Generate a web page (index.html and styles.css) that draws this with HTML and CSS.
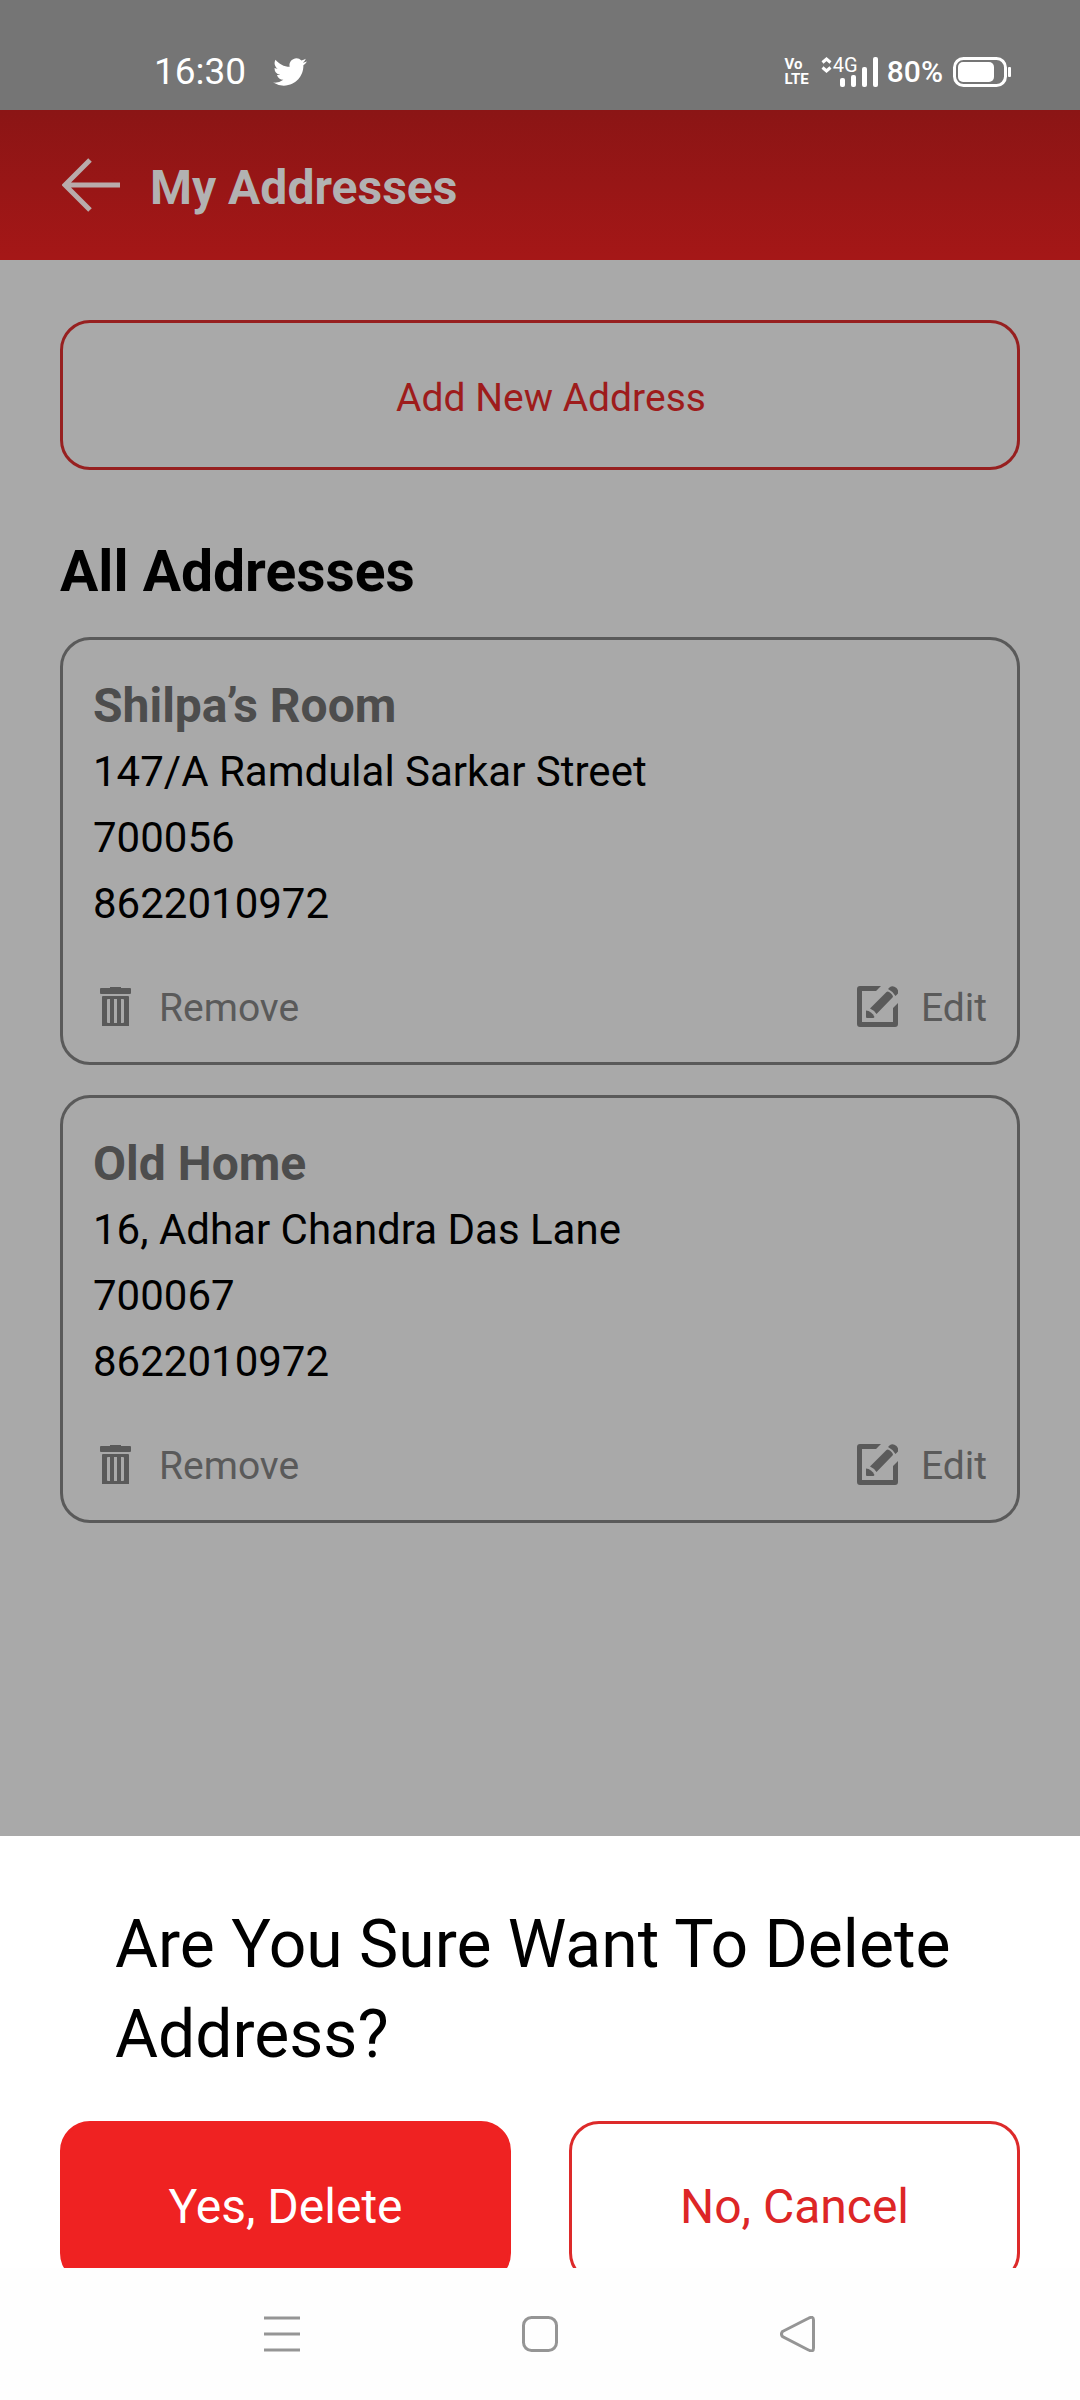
FILE: index.html
```html
<!DOCTYPE html>
<html lang="en">
<head>
<meta charset="utf-8">
<meta name="viewport" content="width=device-width, initial-scale=1">
<title>My Addresses</title>
<link rel="stylesheet" href="styles.css">
</head>
<body>
<svg class="sprite" aria-hidden="true">
  <symbol id="icon-trash" viewBox="0 0 31 39">
    <path d="M10 0h11v1h9q1 0 1 1v4q0 1-1 1H1Q0 7 0 6V2Q0 1 1 1h9z"/>
    <path fill-rule="evenodd" d="M3 9h25q1 0 1 1v29H2V10q0-1 1-1zM7 13v22q0 1 1 1h2V12H8q-1 0-1 1zM14 12v24h3V12zM21 12v24h2q1 0 1-1V13q0-1-1-1z"/>
  </symbol>
  <symbol id="icon-edit" viewBox="0 0 41 41">
    <path d="M24 0H3Q0 0 0 3v35q0 3 3 3h35q3 0 3-3V17l-5 5v14H5V5h14z"/>
    <path d="M13 22.500L29.500 6Q31 4.500 33.500 7Q37 10 35.500 11.500L19.500 28Q17.500 24.500 13 22.500z"/>
    <path d="M31 3L33 1Q36-1 39.500 2Q42 5 41 7.500L38.500 10Q36 5.500 31 3z"/>
    <path d="M9 24.500Q14.500 25 17.500 31L16.500 32H10Q9 32 9 31z"/>
  </symbol>
</svg>

<div class="screen">
  <div class="status">
    <div class="status-group">
      <span class="clock">16:30</span>
      <svg class="bird" viewBox="0 0 24 20" aria-label="Twitter"><path d="M23.953 2.570a10 10 0 0 1-2.825.775 4.958 4.958 0 0 0 2.163-2.723c-.951.555-2.005.959-3.127 1.184a4.920 4.920 0 0 0-8.384 4.482C7.690 6.095 4.067 4.130 1.640 1.162a4.822 4.822 0 0 0-.666 2.475c0 1.710.870 3.213 2.188 4.096a4.904 4.904 0 0 1-2.228-.616v.060a4.923 4.923 0 0 0 3.946 4.827 4.996 4.996 0 0 1-2.212.085 4.936 4.936 0 0 0 4.604 3.417 9.867 9.867 0 0 1-6.102 2.105c-.390 0-.779-.023-1.170-.067a13.995 13.995 0 0 0 7.557 2.209c9.053 0 13.998-7.496 13.998-13.985 0-.210 0-.420-.015-.630A9.935 9.935 0 0 0 24 2.590z"/></svg>
    </div>
    <div class="status-group">
      <span class="volte"><span>Vo</span><span>LTE</span></span>
      <span class="signal">
        <svg class="bars" viewBox="0 0 57 30" aria-hidden="true">
          <path class="stroke" d="M1.500 5.500L5.500 2l4 3.500M1.500 10.500l4 3.500 4-3.500"/>
          <rect x="19" y="21" width="5" height="9" rx="2"/>
          <rect x="30" y="18" width="5" height="12" rx="2"/>
          <rect x="41" y="10" width="5" height="20" rx="2"/>
          <rect x="52" y="0" width="5" height="30" rx="2"/>
        </svg>
        <span class="network">4G</span>
      </span>
      <span class="percent">80%</span>
      <svg class="battery" viewBox="0 0 58 30" aria-hidden="true">
        <rect class="shell" x="1.500" y="1.500" width="51" height="27" rx="9"/>
        <rect x="5" y="5" width="36" height="20" rx="5"/>
        <rect x="55" y="10" width="3" height="10" rx="1"/>
      </svg>
    </div>
  </div>

  <header class="header">
    <a class="back" href="#" aria-label="Back">
      <svg viewBox="0 0 58 54"><path d="M58 27H4M28 2L3 27l25 25"/></svg>
    </a>
    <h1 class="title">My Addresses</h1>
  </header>

  <main class="main">
    <button class="button add" type="button">Add New Address</button>
    <h2 class="heading">All Addresses</h2>
    <div class="list">
      <article class="card">
        <h3 class="name">Shilpa’s Room</h3>
        <p class="line">147/A Ramdulal Sarkar Street</p>
        <p class="line">700056</p>
        <p class="line">8622010972</p>
        <div class="actions">
          <button class="action" type="button"><svg class="trash"><use href="#icon-trash"/></svg>Remove</button>
          <button class="action" type="button"><svg class="edit"><use href="#icon-edit"/></svg>Edit</button>
        </div>
      </article>
      <article class="card">
        <h3 class="name">Old Home</h3>
        <p class="line">16, Adhar Chandra Das Lane</p>
        <p class="line">700067</p>
        <p class="line">8622010972</p>
        <div class="actions">
          <button class="action" type="button"><svg class="trash"><use href="#icon-trash"/></svg>Remove</button>
          <button class="action" type="button"><svg class="edit"><use href="#icon-edit"/></svg>Edit</button>
        </div>
      </article>
    </div>
  </main>

  <section class="sheet" role="dialog" aria-labelledby="question">
    <h2 class="question" id="question">Are You Sure Want To Delete Address?</h2>
    <div class="choices">
      <button class="button choice confirm" type="button">Yes, Delete</button>
      <button class="button choice cancel" type="button">No, Cancel</button>
    </div>
  </section>

  <nav class="nav" aria-label="System">
    <button class="key" type="button" aria-label="Recent apps"><svg viewBox="0 0 36 36"><path d="M0 2h36M0 18h36M0 34h36"/></svg></button>
    <button class="key" type="button" aria-label="Home"><svg viewBox="0 0 36 36"><rect x="1.500" y="1.500" width="33" height="33" rx="8"/></svg></button>
    <button class="key" type="button" aria-label="Back"><svg viewBox="0 0 36 36"><path d="M2.500 15.500L28 2.500Q33.500-.5 33.500 4v28q0 4.500-5 2L2.500 20.500Q.5 18 2.500 15.500z"/></svg></button>
  </nav>
</div>
</body>
</html>
```
FILE: styles.css
```css
* {
  box-sizing: border-box;
}

body {
  margin: 0;
  font-family: Roboto, "Noto Sans", sans-serif;
  background: #fefefe;
  color: #000;
}

h1, h2, h3, p {
  margin: 0;
}

button {
  font-family: inherit;
  padding: 0;
  border: 0;
  background: none;
  cursor: pointer;
}

.sprite {
  display: none;
}

.screen {
  display: flex;
  flex-direction: column;
  min-height: 100vh;
}

/* Status bar */
.status {
  display: flex;
  justify-content: space-between;
  align-items: center;
  height: 110px;
  padding: 34px 69px 0 154px;
  background: #757575;
  color: #fff;
  fill: #fff;
}

.status-group {
  display: flex;
  align-items: center;
}

.clock {
  font-size: 37px;
  line-height: 44px;
}

.bird {
  width: 34px;
  height: 28px;
  margin-left: 27px;
}

.volte {
  display: flex;
  flex-direction: column;
  margin-right: 12px;
  font-size: 15px;
  font-weight: 700;
  line-height: 15px;
}

.signal {
  position: relative;
  width: 57px;
  height: 30px;
}

.bars {
  display: block;
  width: 57px;
  height: 30px;
}

.stroke {
  fill: none;
  stroke: #fff;
  stroke-width: 3;
}

.network {
  position: absolute;
  top: -1px;
  left: 12px;
  font-size: 20px;
  line-height: 18px;
}

.percent {
  margin-left: 9px;
  font-size: 30px;
  font-weight: 500;
  line-height: 30px;
}

.battery {
  width: 58px;
  height: 30px;
  margin-left: 10px;
}

.shell {
  fill: none;
  stroke: #fff;
  stroke-width: 3;
}

/* Page header */
.header {
  display: flex;
  align-items: center;
  gap: 30px;
  height: 150px;
  padding: 0 62px;
  background: linear-gradient(#8b1515, #a51717);
  color: #b2b2b2;
}

.back svg {
  display: block;
  width: 58px;
  height: 54px;
  fill: none;
  stroke: #b9abab;
  stroke-width: 5;
}

.title {
  padding-top: 6px;
  font-size: 48px;
  line-height: 60px;
}

/* Address list */
.main {
  flex: 1;
  padding: 60px;
  background: #a9a9a9;
}

.button {
  height: 150px;
  border: 3px solid #dd2a2a;
  border-radius: 30px;
}

.add {
  width: 100%;
  padding: 5px 0 0 22px;
  border-color: #972020;
  color: #9e1c1c;
  font-size: 39px;
}

.heading {
  margin: 68px 0 31px;
  font-size: 57px;
  line-height: 68px;
}

.list {
  display: grid;
  gap: 30px;
}

.card {
  padding: 33px 30px 24px;
  border: 3px solid #5a5a5a;
  border-radius: 30px;
}

.name {
  color: #4d4d4d;
  font-size: 48px;
  line-height: 66px;
}

.line {
  font-size: 42px;
  line-height: 66px;
}

.actions {
  display: flex;
  justify-content: space-between;
  margin-top: 41px;
}

.action {
  display: flex;
  align-items: center;
  height: 60px;
  color: #5a5a5a;
  fill: #5a5a5a;
  font-size: 39px;
  line-height: 60px;
}

.trash {
  width: 31px;
  height: 39px;
  margin: 0 28px 4px 7px;
}

.edit {
  width: 41px;
  height: 41px;
  margin: 0 23px 4px 0;
}

/* Confirmation sheet */
.sheet {
  padding: 64px 60px 0;
  background: #fff;
}

.question {
  padding: 0 55px;
  font-size: 66px;
  font-weight: 400;
  line-height: 90px;
}

.choices {
  display: grid;
  grid-template-columns: 1fr 1fr;
  gap: 58px;
  margin-top: 41px;
}

.choice {
  height: 162px;
  padding-top: 8px;
  font-size: 48px;
}

.confirm {
  background: #ef2222;
  border-color: #ef2222;
  color: #fff;
}

.cancel {
  color: #dd2626;
}

/* System navigation, covering the lower edge of the sheet */
.nav {
  position: relative;
  display: flex;
  justify-content: center;
  gap: 222px;
  height: 132px;
  margin-top: -15px;
  background: #fefefe;
}

.key svg {
  display: block;
  width: 36px;
  height: 36px;
  fill: none;
  stroke: #959595;
  stroke-width: 3;
}
```
